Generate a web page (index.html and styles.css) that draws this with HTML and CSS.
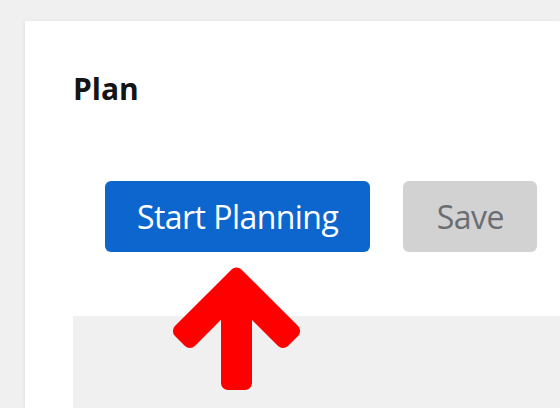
FILE: index.html
```html
<!DOCTYPE html>
<html lang="en">
<head>
<meta charset="utf-8">
<title>Plan</title>
<link rel="stylesheet" href="styles.css">
</head>
<body>
<main class="card">
  <h1 class="title">Plan</h1>
  <div class="toolbar">
    <button class="btn btn-primary" type="button">Start Planning</button>
    <button class="btn btn-disabled" type="button" disabled>Save</button>
  </div>
  <section class="panel"></section>
</main>
<svg class="arrow" width="560" height="408" viewBox="0 0 560 408" aria-hidden="true">
  <polygon points="236.5,274.4 293.1,331 283,341.1 245,303.1 245,383 228,383 228,302.9 189.9,341 179.9,331" fill="#ff0000" stroke="#ff0000" stroke-width="14" stroke-linejoin="round"/>
</svg>
</body>
</html>
```
FILE: styles.css
```css
html, body {
  margin: 0;
  padding: 0;
}
body {
  width: 560px;
  height: 408px;
  overflow: hidden;
  background: #f0f0f0;
  font-family: "Open Sans", "Liberation Sans", sans-serif;
  position: relative;
}
.card {
  margin: 21px 0 0 25px;
  width: 535px;
  height: 387px;
  overflow: hidden;
  background: #ffffff;
  box-shadow: -1px 0 3px rgba(0, 0, 0, 0.06);
  padding: 50px 0 0 48px;
  box-sizing: border-box;
}
.title {
  margin: 0;
  font-size: 30px;
  line-height: 36px;
  font-weight: 700;
  color: #151515;
}
.toolbar {
  display: flex;
  gap: 33px;
  padding-left: 32px;
  margin-top: 74px;
}
.btn {
  font-family: inherit;
  font-size: 32px;
  line-height: 47px;
  letter-spacing: -0.55px;
  padding: 12px 32px;
  border: none;
  border-radius: 6px;
  margin: 0;
}
.btn-primary {
  background: #0d66cd;
  color: #ffffff;
}
.btn-disabled {
  min-width: 134px;
  background: #d2d2d2;
  color: #6a6e73;
}
.panel {
  margin-top: 64px;
  height: 200px;
  background: #f0f0f0;
}
.arrow {
  position: absolute;
  left: 0;
  top: 0;
}
```
